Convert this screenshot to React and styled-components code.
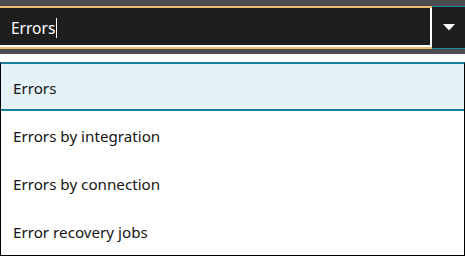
import React from 'react';
import styled, { createGlobalStyle } from 'styled-components';

const GlobalStyle = createGlobalStyle`
  html, body { margin: 0; padding: 0; background: #fff; }
  body { font-family: "Noto Sans", "Liberation Sans", sans-serif; }
`;

const Page = styled.div`
  width: 465px;
  height: 256px;
  display: flex;
  flex-direction: column;
  background: #fff;
`;

const Header = styled.div`
  background: #4b4b50;
  padding: 6px 0 5px;
`;

const FieldRow = styled.div`
  display: flex;
  height: 43px;
`;

const InputBox = styled.div`
  flex: 1;
  display: flex;
  align-items: center;
  background: #1e1e1e;
  border-top: 2px solid #e9bd6e;
  border-bottom: 2px solid #e9bd6e;
  box-shadow: inset -2px -2px 0 #fff;
  padding: 1px 0 0 11px;
  color: #fff;
  font-size: 15.5px;
`;

const Caret = styled.span`
  display: inline-block;
  width: 1px;
  height: 20px;
  background: #fff;
  margin-left: 1px;
`;

const ArrowButton = styled.div`
  width: 33px;
  display: flex;
  align-items: center;
  justify-content: center;
  background: #1e1e1e;
  border-top: 1px solid #1f88a3;
  border-bottom: 1px solid #1f88a3;
`;

const Spacer = styled.div`
  height: 11px;
`;

const List = styled.ul`
  flex: 1;
  margin: 0;
  padding: 0;
  list-style: none;
  border: 1px solid #000;
  border-top: 2px solid #1a7f99;
`;

const Item = styled.li`
  height: ${p => (p.$active ? '47px' : '48px')};
  display: flex;
  align-items: center;
  padding: 2px 0 0 12px;
  box-sizing: border-box;
  font-size: 15.2px;
  color: #161513;
  background: ${p => (p.$active ? '#e4f1f7' : '#fff')};
  border-bottom: ${p => (p.$active ? '2px solid #1a7f99' : 'none')};
`;

const items = ['Errors', 'Errors by integration', 'Errors by connection', 'Error recovery jobs'];

export default function App() {
  return (
    <Page>
      <GlobalStyle />
      <Header>
        <FieldRow>
          <InputBox>Errors<Caret /></InputBox>
          <ArrowButton>
            <svg width="12" height="7" viewBox="0 0 12 7">
              <path d="M0 0 L12 0 L6 6.5 Z" fill="#fff" />
            </svg>
          </ArrowButton>
        </FieldRow>
      </Header>
      <Spacer />
      <List>
        {items.map((t, i) => (
          <Item key={t} $active={i === 0}>{t}</Item>
        ))}
      </List>
    </Page>
  );
}
